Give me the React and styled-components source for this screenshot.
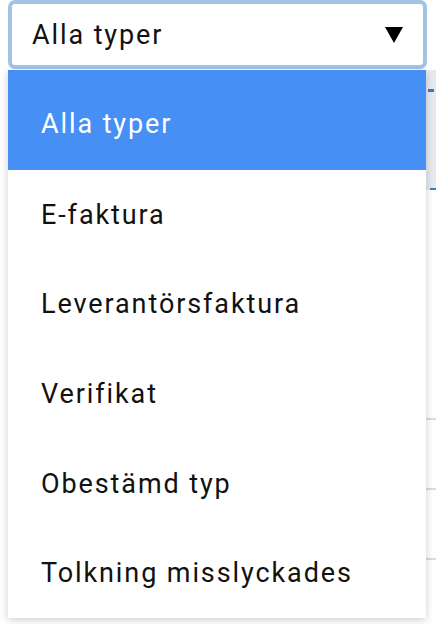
import React from 'react';
import styled, { createGlobalStyle } from 'styled-components';

const options = [
  'Alla typer',
  'E-faktura',
  'Leverantörsfaktura',
  'Verifikat',
  'Obestämd typ',
  'Tolkning misslyckades',
];

const App = () => {
  const selected = 0;
  return (
    <Page>
      <GlobalStyle />
      <SelectBox>
        <SelectLabel>{options[selected]}</SelectLabel>
        <Arrow viewBox="0 0 18 18">
          <polygon points="0,1 18,1 9,17" fill="#000" />
        </Arrow>
      </SelectBox>
      <Area>
        <Table>
          <HeaderRow>
            <HeaderMark />
          </HeaderRow>
          <Row height={230} />
          <Row height={70} />
          <Row height={70} />
          <Row height={70} />
        </Table>
        <Menu>
          {options.map((option, i) => (
            <Option key={option} active={i === selected} first={i === 0}>
              {option}
            </Option>
          ))}
        </Menu>
      </Area>
    </Page>
  );
};

const GlobalStyle = createGlobalStyle`
  body {
    margin: 0;
    background: #fff;
    font-family: Roboto, "Liberation Sans", sans-serif;
  }
`;

const Page = styled.div`
  width: 436px;
  height: 624px;
  overflow: hidden;
`;

const SelectBox = styled.div`
  display: flex;
  align-items: center;
  justify-content: space-between;
  box-sizing: border-box;
  margin: 0 9px 0 8px;
  height: 69px;
  padding: 0 20px 0 20px;
  border: 4px solid #a3c3e6;
  border-radius: 7px;
  background: #fff;
`;

const SelectLabel = styled.span`
  font-size: 27px;
  letter-spacing: 1.9px;
  color: #111;
`;

const Arrow = styled.svg`
  width: 18px;
  height: 18px;
  margin-top: 1px;
`;

const Area = styled.div`
  position: relative;
  margin-top: 1px;
`;

const Table = styled.div`
  display: flex;
  flex-direction: column;
  margin-left: 60px;
`;

const HeaderRow = styled.div`
  position: relative;
  height: 120px;
  background: #e6eaef;
  border-bottom: 2px dashed #3d7cbf;
  box-sizing: border-box;
`;

const HeaderMark = styled.div`
  position: absolute;
  right: 2px;
  top: 19px;
  width: 6px;
  height: 3px;
  background: #3d7cbf;
`;

const Row = styled.div`
  height: ${p => p.height}px;
  box-sizing: border-box;
  border-bottom: 2px solid #dcdcdc;
`;

const Menu = styled.ul`
  position: absolute;
  top: 0;
  left: 8px;
  width: 418px;
  margin: 0;
  padding: 0;
  list-style: none;
  background: #fff;
  box-shadow: 0 2px 8px rgba(0, 0, 0, 0.2);
`;

const Option = styled.li`
  display: flex;
  align-items: center;
  box-sizing: border-box;
  height: ${p => (p.first ? 100 : 89.6)}px;
  padding: ${p => (p.first ? '8px' : '0')} 33px 0;
  font-size: 27px;
  letter-spacing: 1.9px;
  color: ${p => (p.active ? '#fff' : '#111')};
  background: ${p => (p.active ? '#468ff5' : '#fff')};
`;

export default App;
